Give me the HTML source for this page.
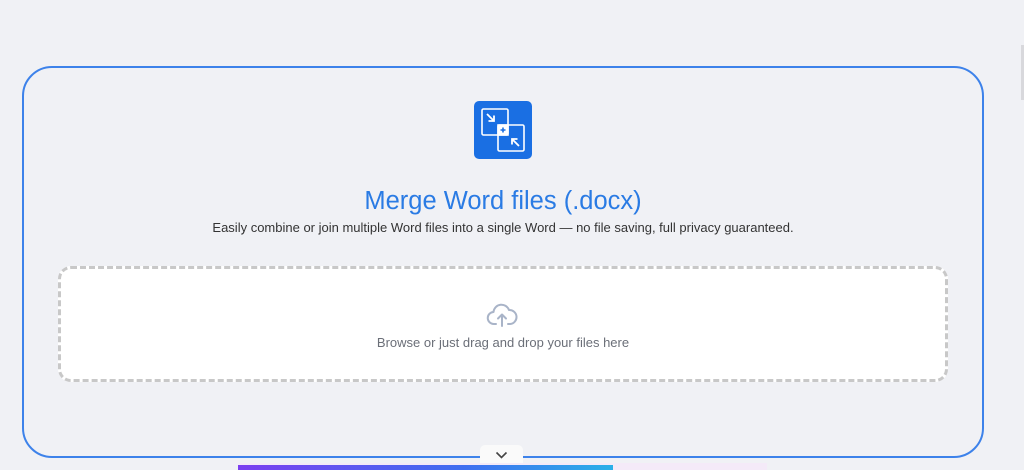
<!DOCTYPE html>
<html><head><meta charset="utf-8"><style>
html,body{margin:0;padding:0;width:1024px;height:470px;overflow:hidden;background:#f0f1f5;font-family:"Liberation Sans",Roboto,sans-serif;}
.box{position:absolute;left:22px;top:66px;width:958px;height:388px;border:2px solid #3d82ea;border-radius:30px;}
.icon{position:absolute;left:474px;top:101px;width:58px;height:58px;background:#1a6fe3;border-radius:5px;}
h1{position:absolute;left:0;width:1006px;top:185px;margin:0;text-align:center;font-weight:normal;font-size:25.5px;color:#2a7be4;line-height:32px;}
.sub{position:absolute;left:0;width:1006px;top:220px;text-align:center;font-size:13px;color:#333;line-height:16px;}
.drop{position:absolute;left:58px;top:266px;width:884px;height:110px;background:#fff;border:3px dashed #c8c8c8;border-radius:13px;}
.dtxt{position:absolute;left:0;width:1006px;top:335px;text-align:center;font-size:13px;color:#6b6f78;line-height:16px;}
.tab{position:absolute;left:480px;top:445px;width:43px;height:20px;background:#fafafa;border-radius:5px 5px 0 0;}
.banner{position:absolute;left:238px;top:463px;width:529px;height:7px;background:#f4eaf8;}
.bar{position:absolute;left:0;top:2px;width:375px;height:5px;background:linear-gradient(90deg,#7b3ff0,#3f6ef0 60%,#2ab0e8);}
.sb{position:absolute;left:1021px;top:45px;width:3px;height:55px;background:#d8d8dc;}
</style></head><body>
<div class="sb"></div>
<div class="box"></div>
<div class="icon"><svg width="58" height="58" viewBox="0 0 58 58" fill="none" stroke="#fff" stroke-width="1.6">
<rect x="8" y="8" width="26" height="26" rx="1.5"/><rect x="24" y="24" width="26" height="26" rx="1.5"/>
<rect x="24" y="24" width="10" height="10" fill="#fff"/>
<path d="M29 26.5v5M26.5 29h5" stroke="#1a6fe3" stroke-width="1.6"/>
<path d="M13 13l7 7M20 14.5v5.5h-5.5" stroke-width="1.8"/>
<path d="M45 45l-7-7M38 43.5v-5.5h5.5" stroke-width="1.8"/>
</svg></div>
<h1>Merge Word files (.docx)</h1>
<div class="sub">Easily combine or join multiple Word files into a single Word — no file saving, full privacy guaranteed.</div>
<div class="drop"></div>
<svg style="position:absolute;left:486px;top:302px" width="32" height="26" viewBox="0 0 32 26" fill="none" stroke="#a9b4c8" stroke-width="2" stroke-linecap="round" stroke-linejoin="round">
<path d="M10 22H8a6 6 0 0 1-.5-12A8 8 0 0 1 23 8a6 6 0 0 1 1 14h-2"/>
<path d="M16 24V13M12 16.5l4-4 4 4"/>
</svg>
<div class="dtxt">Browse or just drag and drop your files here</div>
<div class="tab"><svg style="position:absolute;left:15px;top:6px" width="13" height="8" viewBox="0 0 13 8" fill="none" stroke="#444" stroke-width="1.6"><path d="M1.5 1.5l5 5 5-5"/></svg></div>
<div class="banner"><div class="bar"></div></div>
</body></html>
